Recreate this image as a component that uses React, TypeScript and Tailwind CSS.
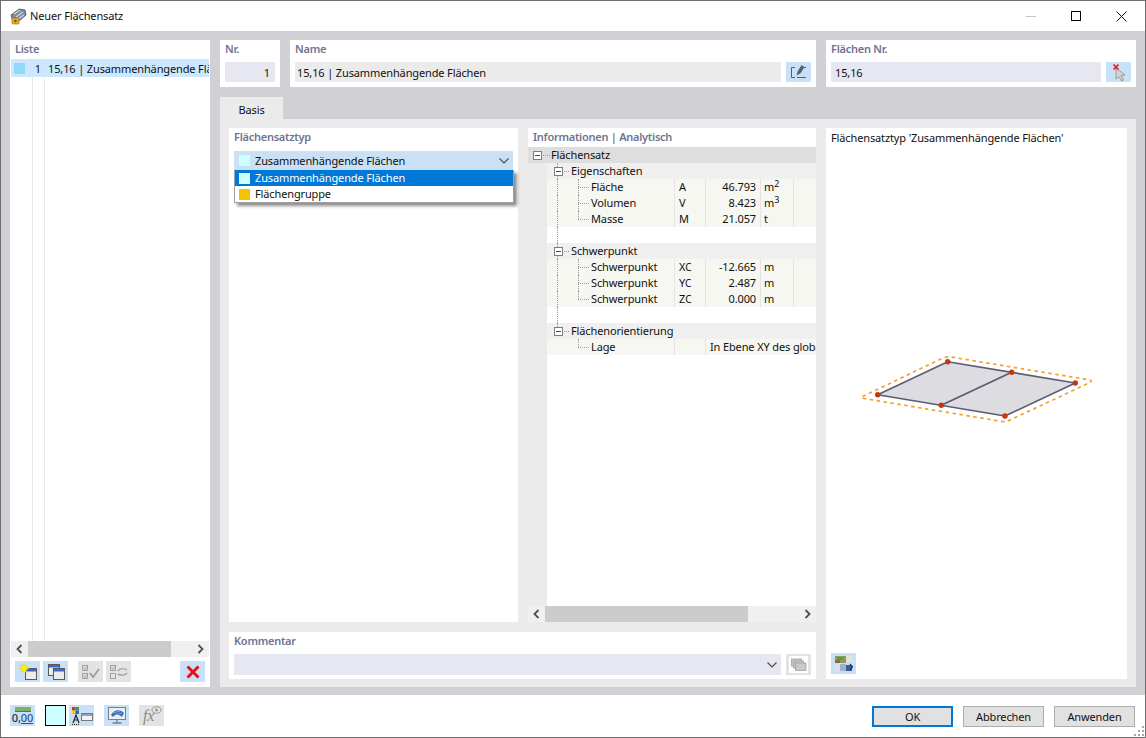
import type { ReactNode } from 'react'

const label = 'text-[11px] leading-[16px] font-semibold tracking-[-0.26px] text-[#6f7391]'

function ToolButton({ children, disabled }: { children: ReactNode; disabled?: boolean }) {
  return (
    <div className={`w-[25px] h-[21px] shrink-0 flex items-center justify-center ${disabled ? 'bg-[#e3e3e3]' : 'bg-[#c9e1f6]'}`}>
      {children}
    </div>
  )
}

function Chevron() {
  return (
    <svg width="10" height="6" viewBox="0 0 10 6" className="shrink-0">
      <path d="M0.5 0.5 L5 5 L9.5 0.5" fill="none" stroke="#4a4a4a" strokeWidth="1.1" />
    </svg>
  )
}

function ArrowLeft() {
  return (
    <svg width="7" height="10" viewBox="0 0 7 10">
      <path d="M5.5 1 L1.5 5 L5.5 9" fill="none" stroke="#505050" strokeWidth="1.8" />
    </svg>
  )
}

function ArrowRight() {
  return (
    <svg width="7" height="10" viewBox="0 0 7 10">
      <path d="M1.5 1 L5.5 5 L1.5 9" fill="none" stroke="#505050" strokeWidth="1.8" />
    </svg>
  )
}

function Win({ x, y }: { x: number; y: number }) {
  return (
    <g>
      <rect x={x + 0.5} y={y + 0.5} width="11" height="11" fill="#ececec" stroke="#5a5a5a" />
      <rect x={x + 1} y={y + 1} width="10" height="2.5" fill="#3b66cf" />
    </g>
  )
}

function TitleIcon() {
  return (
    <svg width="18" height="18" viewBox="0 0 18 18">
      <path d="M2 8 L10 2 L16 3 L17 8 L10 14 L4 15 Z" fill="#7c8aa3" stroke="#3d4a5e" strokeWidth="0.8" />
      <path d="M5 7 L11 3 M7 10 L14 5 M9 12 L15 8" stroke="#d5dbe5" strokeWidth="1.1" />
      <rect x="3" y="11" width="7" height="6" rx="1" fill="#e3b021" stroke="#8a6a10" strokeWidth="0.6" />
      <circle cx="6.5" cy="14" r="1.2" fill="#6b5008" />
    </svg>
  )
}

function NewIcon() {
  return (
    <svg width="20" height="18" viewBox="0 0 20 18">
      <Win x={7} y={5} />
      <path d="M6 0 L7 3 L10 2 L8.2 4.6 L11 6 L8 6.6 L8.6 10 L6 7.6 L3.4 10 L4 6.6 L1 6 L3.8 4.6 L2 2 L5 3 Z" fill="#fff200" stroke="#d8c800" strokeWidth="0.4" />
    </svg>
  )
}

function CopyIcon() {
  return (
    <svg width="20" height="18" viewBox="0 0 20 18">
      <Win x={2} y={1} />
      <Win x={7} y={5} />
    </svg>
  )
}

function CheckAllIcon() {
  return (
    <svg width="20" height="18" viewBox="0 0 20 18" fill="none" stroke="#a2a2a2">
      <rect x="1.5" y="2.5" width="5" height="5" />
      <rect x="1.5" y="10.5" width="5" height="5" />
      <path d="M2.5 4.5 L4 6.5 L7 2 M2.5 12.5 L4 14.5 L7 10" />
      <path d="M9 10 L12 14 L18 6" strokeWidth="2" />
    </svg>
  )
}

function CheckSwapIcon() {
  return (
    <svg width="20" height="18" viewBox="0 0 20 18" fill="none" stroke="#a2a2a2">
      <rect x="1.5" y="2.5" width="5" height="5" />
      <rect x="1.5" y="10.5" width="5" height="5" />
      <path d="M2.5 4.5 L4 6.5 L7 2" />
      <path d="M9 8 C11 5 15 5 18 7 M18 10 C15 13 11 12 9 11" strokeWidth="1.4" />
    </svg>
  )
}

function PickIcon() {
  return (
    <svg width="25" height="20" viewBox="0 0 25 20">
      <path d="M10 6 L10 17 L13 14.5 L15.5 19 L17.5 18 L15 13.5 L19 13 Z" fill="#d4d4d4" stroke="#8a8a8a" strokeWidth="0.8" />
      <path d="M7.5 2.5 L12.5 7.5 M12.5 2.5 L7.5 7.5" stroke="#e8112d" strokeWidth="1.5" />
    </svg>
  )
}

function EditIcon() {
  return (
    <svg width="25" height="20" viewBox="0 0 25 20" fill="none" stroke="#55606c">
      <path d="M9 5.5 H5.5 V15.5 H9" strokeWidth="1" />
      <path d="M11 15.5 H20 M17.5 5.5 H20" strokeWidth="1" />
      <path d="M11 13 L12 9.5 L15.5 3.5 L18 5 L14.5 11 Z" fill="#55606c" strokeWidth="0.6" />
    </svg>
  )
}

function PictureIcon() {
  return (
    <svg width="20" height="18" viewBox="0 0 20 18">
      <rect x="1" y="1" width="11" height="7" fill="#8f9a62" />
      <rect x="3" y="2" width="6" height="3" fill="#4aa83a" />
      <rect x="1" y="5" width="5" height="3" fill="#a0623c" />
      <rect x="12" y="1" width="6" height="7" fill="#dfe5d6" />
      <rect x="1" y="9" width="5" height="7" fill="#dbe2ee" />
      <rect x="6" y="9" width="6" height="7" fill="#9fb0cc" />
      <rect x="12" y="10" width="6" height="6" fill="#3a5f98" />
      <path d="M16 9 L18.5 12 L16 15" fill="none" stroke="#1b3a6b" strokeWidth="1.2" />
    </svg>
  )
}

function StackIcon() {
  return (
    <svg width="16" height="14" viewBox="0 0 16 14" fill="#c9c9c9" stroke="#a0a0a0" strokeWidth="0.8">
      <rect x="0.5" y="1" width="10" height="7" />
      <rect x="2.5" y="3" width="10" height="7" />
      <rect x="4.5" y="5" width="10.5" height="7.5" />
    </svg>
  )
}

function SchemeIcon() {
  return (
    <svg width="22" height="20" viewBox="0 0 22 20">
      <rect x="1" y="1" width="3.5" height="3.5" fill="#d22f2f" />
      <rect x="4.5" y="1" width="3.5" height="3.5" fill="#3d9a3a" />
      <rect x="1" y="4.5" width="3.5" height="3.5" fill="#e8d020" />
      <rect x="4.5" y="4.5" width="3.5" height="3.5" fill="#3560c8" />
      <path d="M2 17 L5 9 L8 17 M3.2 14 H6.8" fill="none" stroke="#222" strokeWidth="1.2" />
      <path d="M1 18.5 H9" stroke="#222" strokeDasharray="1 1" />
      <rect x="10.5" y="7.5" width="11" height="7" fill="#f3f3f3" stroke="#777" />
      <rect x="11" y="8" width="10" height="2" fill="#8fa4c8" />
    </svg>
  )
}

function MonitorIcon() {
  return (
    <svg width="22" height="19" viewBox="0 0 22 19">
      <rect x="2.5" y="1.5" width="17" height="12" fill="#e8eef5" stroke="#7a7f87" />
      <path d="M5 9 C8 3 14 3 18 7 L16 11 C13 8 9 8 7 11 Z" fill="#3f6db3" />
      <path d="M7 7 L14 5 M9 9 L16 7" stroke="#9fbde6" strokeWidth="0.7" />
      <path d="M11 14 V16.5 M6.5 17 H15.5" stroke="#7a7f87" strokeWidth="1.3" />
    </svg>
  )
}

function FxIcon() {
  return (
    <div className="relative w-[25px] h-[21px] bg-[#e3e3e3] overflow-hidden">
      <span className="absolute left-[4px] top-[2px] text-[16px] leading-[18px] italic text-[#8a8a8a] [font-family:'Liberation_Serif',serif]">fx</span>
      <svg width="11" height="9" viewBox="0 0 11 9" className="absolute left-[12px] top-[1px]">
        <ellipse cx="5.5" cy="4" rx="4.5" ry="3.2" fill="none" stroke="#9a9a9a" />
        <circle cx="5.5" cy="4" r="1.5" fill="#9a9a9a" />
      </svg>
    </div>
  )
}

function ScaleIcon() {
  return (
    <div className="w-[25px] h-[21px] bg-[#c9e1f6] flex flex-col items-center pt-[2px]">
      <div className="w-[16px] h-[5px] bg-[#7fb069] border-b border-[#4e7d3a]" />
      <div className="text-[11px] leading-[12px] font-medium text-[#1c2c55]">
        0,<span className="underline text-[#2d4fa0]">00</span>
      </div>
    </div>
  )
}

function Sketch() {
  return (
    <svg width="250" height="85" viewBox="850 345 250 85" className="block">
      <polygon points="947.7,361.7 1075.3,383 1005,416 877.7,394.7" fill="#dcdce1" stroke="#5c5c72" strokeWidth="1.6" strokeLinejoin="round" />
      <line x1="1011.7" y1="372.3" x2="941.3" y2="405.3" stroke="#5c5c72" strokeWidth="1.8" />
      <path
        d="M862.5 396.5 L943 358 Q947 356.3 951 357 L1090 380 Q1092.5 381 1090 382.5 L1009 420.5 Q1006 422 1002 421.5 L864 398.5 Q861.5 397.5 862.5 396.5 Z"
        fill="none"
        stroke="#f2a130"
        strokeWidth="1.7"
        strokeDasharray="3.5 3.5"
      />
      {[
        [947.7, 361.7],
        [1011.7, 372.3],
        [1075.3, 383],
        [1005, 416],
        [941.3, 405.3],
        [877.7, 394.7],
      ].map(([x, y]) => (
        <circle key={`${x}-${y}`} cx={x} cy={y} r="2.7" fill="#c8360c" />
      ))}
    </svg>
  )
}

type TreeRow = {
  kind: 'root' | 'group' | 'item' | 'blank' | 'wide'
  name?: string
  sym?: ReactNode
  value?: string
  unit?: ReactNode
  last?: boolean
  spine?: boolean
}

const sub = (a: string) => (
  <>
    {a}
    <span className="text-[10px]">C</span>
  </>
)

const rows: TreeRow[] = [
  { kind: 'root', name: 'Flächensatz' },
  { kind: 'group', name: 'Eigenschaften', spine: true },
  { kind: 'item', name: 'Fläche', sym: 'A', value: '46.793', unit: <>m<sup className="text-[9px] leading-none">2</sup></>, spine: true },
  { kind: 'item', name: 'Volumen', sym: 'V', value: '8.423', unit: <>m<sup className="text-[9px] leading-none">3</sup></>, spine: true },
  { kind: 'item', name: 'Masse', sym: 'M', value: '21.057', unit: 't', last: true, spine: true },
  { kind: 'blank', spine: true },
  { kind: 'group', name: 'Schwerpunkt', spine: true },
  { kind: 'item', name: 'Schwerpunkt', sym: sub('X'), value: '-12.665', unit: 'm', spine: true },
  { kind: 'item', name: 'Schwerpunkt', sym: sub('Y'), value: '2.487', unit: 'm', spine: true },
  { kind: 'item', name: 'Schwerpunkt', sym: sub('Z'), value: '0.000', unit: 'm', last: true, spine: true },
  { kind: 'blank', spine: true },
  { kind: 'group', name: 'Flächenorientierung', last: true, spine: true },
  { kind: 'wide', name: 'Lage', value: 'In Ebene XY des globalen KS', last: true },
]

function PlusBox() {
  return (
    <span className="w-[9px] h-[9px] border border-[#7d7d7d] bg-white flex items-center justify-center shrink-0">
      <span className="w-[5px] h-px bg-[#444]" />
    </span>
  )
}

function Row({ row }: { row: TreeRow }) {
  const dots = 'absolute border-[#9d9d9d] border-dotted'
  if (row.kind === 'root') {
    return (
      <div className="relative h-[16px] bg-[#dedee0] flex items-center pl-[5px]">
        <PlusBox />
        <span className={`${dots} left-[15px] top-[8px] w-[7px] border-t`} />
        <span className="ml-[9px]">{row.name}</span>
      </div>
    )
  }
  const spine = row.spine && <span className={`${dots} left-[10px] top-0 h-full border-l z-10`} />
  if (row.kind === 'blank') {
    return <div className="relative h-[16px] bg-white ml-[19px]">{spine}</div>
  }
  if (row.kind === 'group') {
    return (
      <div className="relative h-[16px] bg-[#f0f0f0] ml-[19px] flex items-center pl-[7px]">
        <span className={`${dots} left-[10px] top-0 ${row.last ? 'h-[4px]' : 'h-full'} border-l`} />
        <span className="relative z-10"><PlusBox /></span>
        <span className={`${dots} left-[15px] top-[8px] w-[7px] border-t`} />
        <span className="ml-[8px]">{row.name}</span>
      </div>
    )
  }
  const cell = 'shrink-0 h-full border-l border-[#e4e4e4] leading-[16px]'
  return (
    <div className="relative h-[16px] bg-[#f6f7f0] ml-[19px] flex items-center whitespace-nowrap overflow-hidden">
      {row.kind === 'item' && spine}
      <span className={`${dots} left-[31px] top-0 ${row.last ? 'h-[8px]' : 'h-full'} border-l`} />
      <span className={`${dots} left-[31px] top-[8px] w-[11px] border-t`} />
      <span className="w-[127px] pl-[44px] shrink-0 h-full leading-[16px]">{row.name}</span>
      <span className={`w-[31px] pl-[4px] ${cell}`}>{row.sym}</span>
      {row.kind === 'wide' ? (
        <span className={`pl-[4px] ${cell}`}>{row.value}</span>
      ) : (
        <>
          <span className={`w-[55px] text-right pr-[4px] ${cell}`}>{row.value}</span>
          <span className={`w-[34px] pl-[3px] border-r ${cell}`}>{row.unit}</span>
        </>
      )}
    </div>
  )
}

function HScroll({ left, width }: { left: string; width: string }) {
  return (
    <div className="h-[16px] bg-[#f0f0f0] flex items-center shrink-0">
      <div className={`${left} shrink-0 flex justify-center`}><ArrowLeft /></div>
      <div className={`${width} h-full bg-[#cccccc] shrink-0`} />
      <div className="flex-1 flex justify-end pr-[5px]"><ArrowRight /></div>
    </div>
  )
}

function DialogButton({ children, primary }: { children: ReactNode; primary?: boolean }) {
  return (
    <div className={`w-[81px] h-[21px] bg-[#e1e1e1] flex items-center justify-center ${primary ? 'border-2 border-[#0078d7]' : 'border border-[#adadad]'}`}>
      {children}
    </div>
  )
}

export default function App() {
  return (
    <div className="w-[1146px] h-[738px] flex flex-col bg-white border border-[#6f6f6f] overflow-hidden text-[11px] leading-[16px] tracking-[-0.13px] text-[#111] [font-family:'Noto_Sans',sans-serif]">
      {/* title bar */}
      <div className="h-[30px] shrink-0 flex items-center pl-[8px]">
        <TitleIcon />
        <span className="ml-[3px]">Neuer Flächensatz</span>
        <div className="ml-auto flex items-center gap-[35px] pr-[18px]">
          <div className="w-[10px] h-px bg-[#c4c4c4]" />
          <div className="w-[10px] h-[10px] border border-black" />
          <svg width="11" height="11" viewBox="0 0 11 11">
            <path d="M0.5 0.5 L10.5 10.5 M10.5 0.5 L0.5 10.5" stroke="#111" strokeWidth="1" />
          </svg>
        </div>
      </div>

      {/* main */}
      <div className="flex-1 min-h-0 bg-[#d0d0d5] px-[9px] pt-[9px] pb-[8px] flex gap-[10px]">
        {/* list */}
        <div className="w-[200px] shrink-0 bg-white flex flex-col px-px">
          <div className={`${label} pl-[4px] h-[19px] pt-px`}>Liste</div>
          <div className="relative flex-1 min-h-0">
            <span className="absolute left-[21px] top-0 bottom-0 w-px bg-[#e8e8e8]" />
            <span className="absolute left-[33px] top-0 bottom-0 w-px bg-[#e8e8e8]" />
            <div className="relative h-[18px] bg-[#cce8ff] flex items-center overflow-hidden whitespace-nowrap pt-px">
              <span className="ml-[3px] w-[11px] h-[11px] bg-[#92d9f7] shrink-0 -mt-px" />
              <span className="w-[16px] text-right shrink-0">1</span>
              <span className="ml-[7px]">15,16 | Zusammenhängende Flächen</span>
            </div>
          </div>
          <HScroll left="w-[17px]" width="w-[143px]" />
          <div className="h-[30px] shrink-0 flex items-center pl-[4px] pb-[1px]">
            <ToolButton><NewIcon /></ToolButton>
            <div className="ml-[3px]"><ToolButton><CopyIcon /></ToolButton></div>
            <div className="ml-[10px]"><ToolButton disabled><CheckAllIcon /></ToolButton></div>
            <div className="ml-[3px]"><ToolButton disabled><CheckSwapIcon /></ToolButton></div>
            <div className="ml-[49px]">
              <ToolButton>
                <svg width="14" height="14" viewBox="0 0 14 14">
                  <path d="M1.5 1.5 L12.5 12.5 M12.5 1.5 L1.5 12.5" stroke="#e8111a" strokeWidth="3" />
                </svg>
              </ToolButton>
            </div>
          </div>
        </div>

        <div className="flex-1 min-w-0 flex flex-col">
          {/* top cards */}
          <div className="h-[47px] shrink-0 flex gap-[10px]">
            <div className="w-[60px] bg-white px-[5px] pt-px">
              <div className={`${label} h-[21px]`}>Nr.</div>
              <div className="h-[20px] bg-[#e6e7f1] text-right pr-[5px] leading-[22px]">1</div>
            </div>
            <div className="w-[526px] bg-white px-[5px] pt-px">
              <div className={`${label} h-[21px]`}>Name</div>
              <div className="flex gap-[5px]">
                <div className="flex-1 h-[20px] bg-[#ebebeb] pl-[2px] leading-[22px]">15,16 | Zusammenhängende Flächen</div>
                <div className="w-[25px] h-[20px] bg-[#c9e1f6]"><EditIcon /></div>
              </div>
            </div>
            <div className="flex-1 bg-white px-[5px] pt-px">
              <div className={`${label} h-[21px]`}>Flächen Nr.</div>
              <div className="flex gap-[5px]">
                <div className="flex-1 h-[20px] bg-[#e6e7f1] pl-[4px] leading-[22px]">15,16</div>
                <div className="w-[25px] h-[20px] bg-[#c9e1f6]"><PickIcon /></div>
              </div>
            </div>
          </div>

          {/* tab */}
          <div className="mt-[10px] h-[22px] w-[63px] shrink-0 bg-[#ebebeb] flex items-center justify-center pt-[4px]">Basis</div>

          <div className="flex-1 min-h-0 bg-[#ebebeb] px-[9px] pt-[9px] pb-[8px] flex gap-[10px]">
            <div className="w-[587px] shrink-0 flex flex-col gap-[10px]">
              <div className="flex-1 min-h-0 flex gap-[10px]">
                {/* type */}
                <div className="relative w-[289px] shrink-0 bg-white px-[5px] pt-px">
                  <div className={`${label} h-[22px]`}>Flächensatztyp</div>
                  <div className="h-[19px] bg-[#c9e0f5] flex items-center pl-[5px] pr-[4px]">
                    <span className="w-[11px] h-[11px] bg-[#ccffff]" />
                    <span className="ml-[5px] flex-1 pt-px">Zusammenhängende Flächen</span>
                    <Chevron />
                  </div>
                  <div className="absolute left-[5px] top-[42px] w-[280px] h-[33px] bg-white border-x border-b border-[#a0a0a0] shadow-[3px_3px_3px_rgba(0,0,0,0.45)]">
                    <div className="h-[16px] bg-[#0078d7] text-white flex items-center pl-[4px]">
                      <span className="w-[11px] h-[11px] bg-[#ccffff]" />
                      <span className="ml-[5px]">Zusammenhängende Flächen</span>
                    </div>
                    <div className="h-[16px] flex items-center pl-[4px]">
                      <span className="w-[11px] h-[11px] bg-[#f4c300]" />
                      <span className="ml-[5px]">Flächengruppe</span>
                    </div>
                  </div>
                </div>

                {/* tree */}
                <div className="flex-1 min-w-0 bg-white flex flex-col">
                  <div className={`${label} h-[19px] shrink-0 pl-[5px] pt-px`}>Informationen | Analytisch</div>
                  <div className="relative flex-1 min-h-0 overflow-hidden">
                    <span className="absolute left-0 top-0 bottom-0 w-[19px] bg-[#ebebeb]" />
                    <div className="relative">
                      {rows.map((row, i) => (
                        <Row key={i} row={row} />
                      ))}
                    </div>
                  </div>
                  <HScroll left="w-[17px]" width="w-[203px]" />
                </div>
              </div>

              {/* comment */}
              <div className="h-[47px] shrink-0 bg-white px-[5px] pt-px">
                <div className={`${label} h-[21px]`}>Kommentar</div>
                <div className="flex gap-[5px]">
                  <div className="flex-1 h-[21px] bg-[#e6e7f1] flex items-center justify-end pr-[4px]"><Chevron /></div>
                  <div className="w-[25px] h-[21px] bg-[#e3e3e3] flex items-center justify-center">
                    <div className="w-[19px] h-[17px] bg-white flex items-center justify-center"><StackIcon /></div>
                  </div>
                </div>
              </div>
            </div>

            {/* preview */}
            <div className="flex-1 min-w-0 bg-white flex flex-col px-[5px] pb-[5px]">
              <div className="h-[19px] leading-[19px] shrink-0 whitespace-nowrap">Flächensatztyp 'Zusammenhängende Flächen'</div>
              <div className="mt-[198px] ml-[19px] shrink-0"><Sketch /></div>
              <div className="mt-auto"><ToolButton><PictureIcon /></ToolButton></div>
            </div>
          </div>
        </div>
      </div>

      {/* footer */}
      <div className="relative h-[42px] shrink-0 flex items-center pl-[9px] pr-[10px] pb-[1px]">
        <ScaleIcon />
        <div className="ml-[10px] w-[21px] h-[21px] bg-[#ccffff] border border-black" />
        <div className="ml-[3px]"><ToolButton><SchemeIcon /></ToolButton></div>
        <div className="ml-[10px]"><ToolButton><MonitorIcon /></ToolButton></div>
        <div className="ml-[10px]"><FxIcon /></div>
        <div className="ml-auto flex gap-[10px] pt-[2px]">
          <DialogButton primary>OK</DialogButton>
          <DialogButton>Abbrechen</DialogButton>
          <DialogButton>Anwenden</DialogButton>
        </div>
        <svg width="11" height="11" viewBox="0 0 11 11" className="absolute right-0 bottom-0" fill="#a8a8a8">
          <rect x="8" y="0" width="2" height="2" />
          <rect x="4" y="4" width="2" height="2" />
          <rect x="8" y="4" width="2" height="2" />
          <rect x="0" y="8" width="2" height="2" />
          <rect x="4" y="8" width="2" height="2" />
          <rect x="8" y="8" width="2" height="2" />
        </svg>
      </div>
    </div>
  )
}
